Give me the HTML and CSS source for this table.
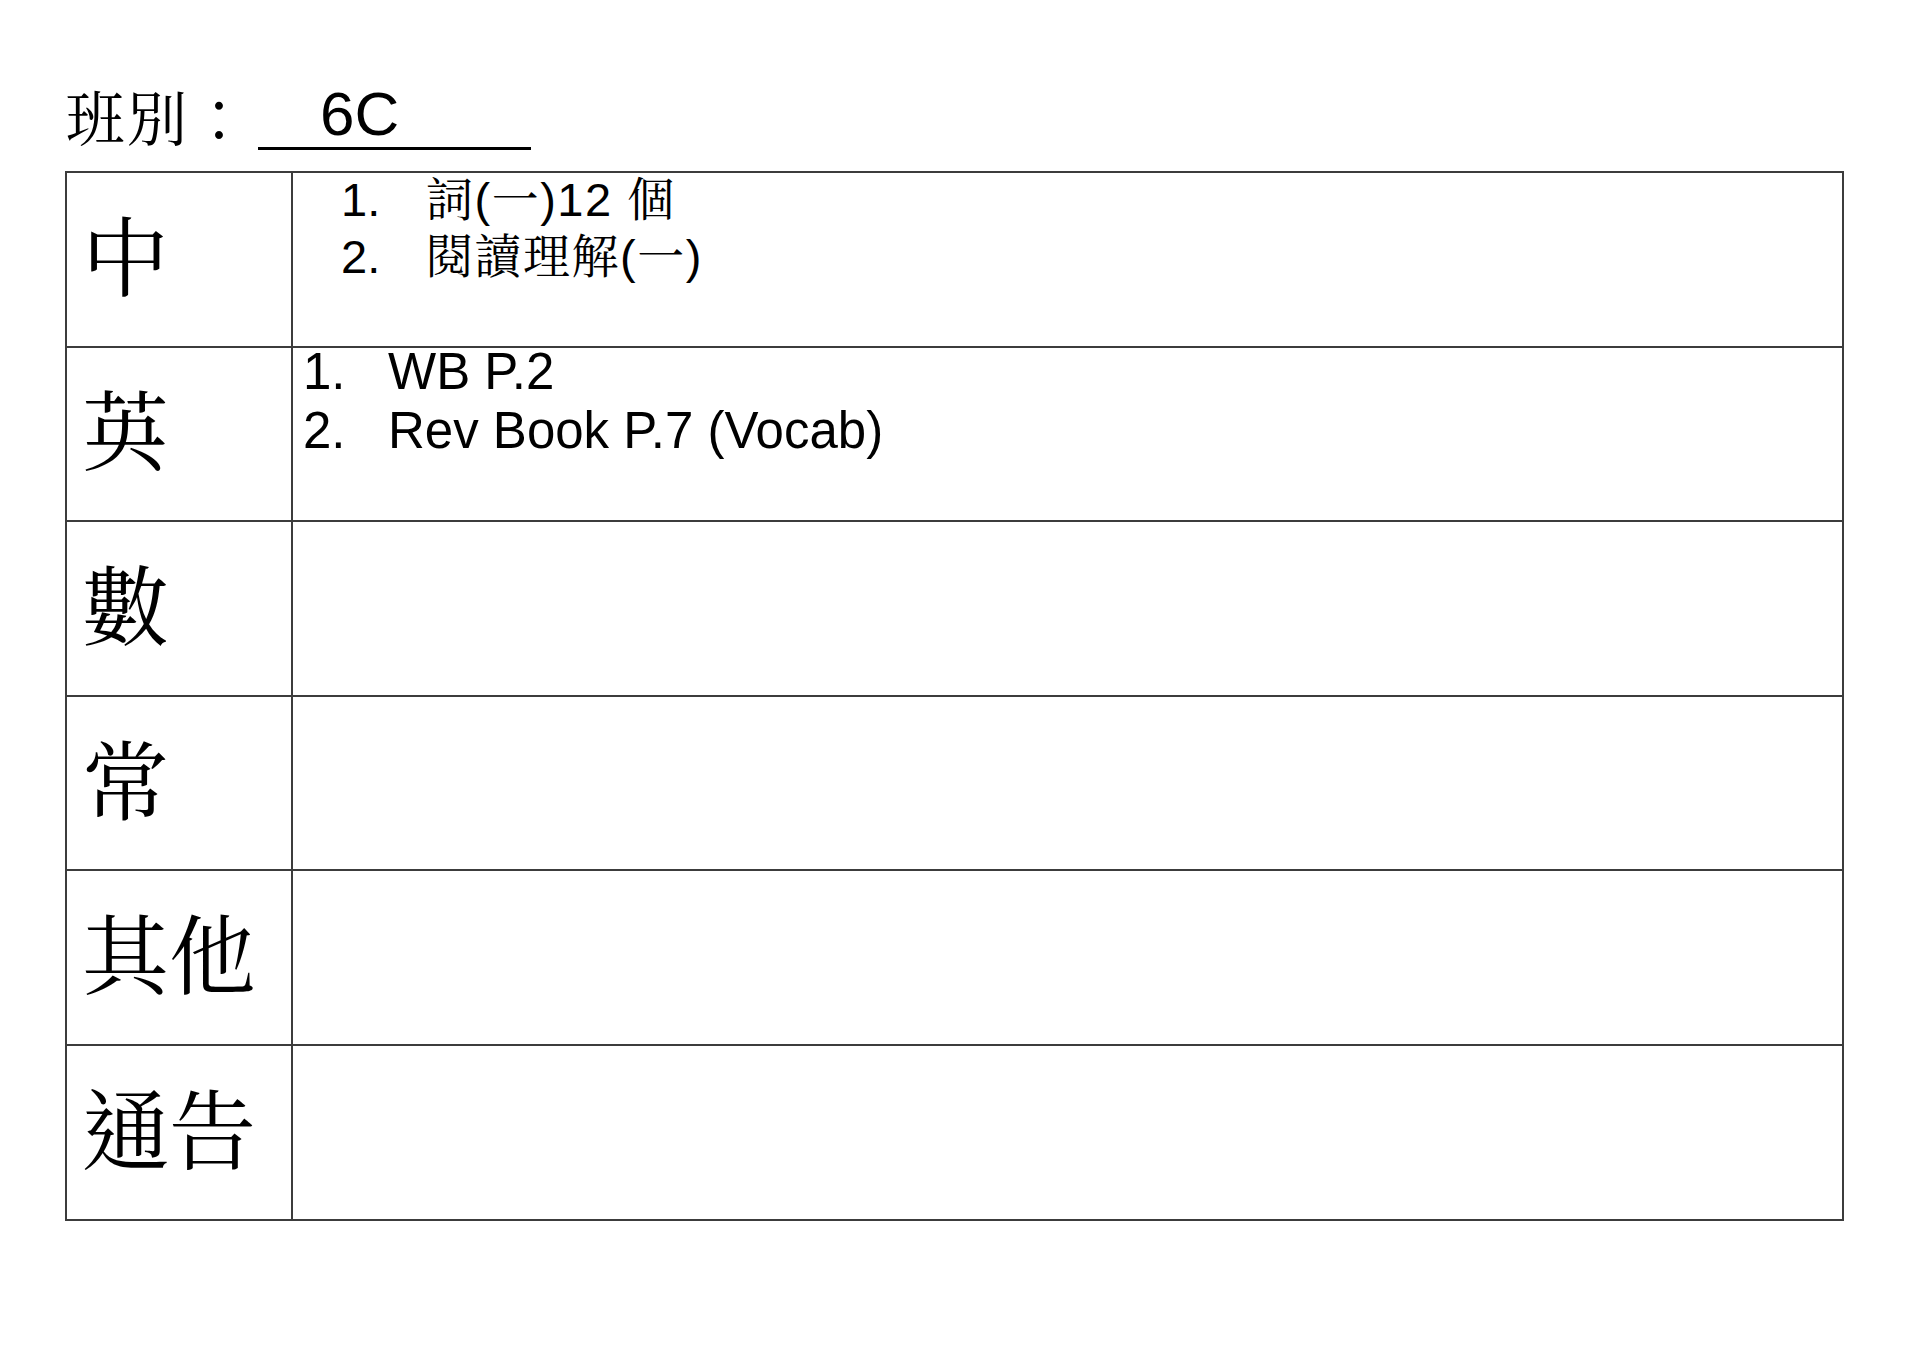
FILE: index.html
```html
<!DOCTYPE html>
<html>
<head>
    <meta charset="utf-8">
    <link rel="stylesheet" href="styles.css">
</head>
<body>
    <div class="sheet">
        <!-- Class heading -->
        <div class="heading">
            <span class="label">班別：</span><span class="class-name">6C</span>
        </div>

        <!-- Homework table -->
        <table class="homework">
            <colgroup>
                <col class="subject-col">
                <col>
            </colgroup>
            <tr>
                <td class="subject">中</td>
                <td class="tasks chinese">
                    <div class="list">
                        <div class="item"><span class="num">1.</span><span>詞(一)12 個</span></div>
                        <div class="item"><span class="num">2.</span><span>閱讀理解(一)</span></div>
                    </div>
                </td>
            </tr>
            <tr>
                <td class="subject">英</td>
                <td class="tasks english">
                    <div class="list">
                        <div class="item"><span class="num">1.</span><span>WB P.2</span></div>
                        <div class="item"><span class="num">2.</span><span>Rev Book P.7 (Vocab)</span></div>
                    </div>
                </td>
            </tr>
            <tr>
                <td class="subject">數</td>
                <td class="tasks"></td>
            </tr>
            <tr>
                <td class="subject">常</td>
                <td class="tasks"></td>
            </tr>
            <tr>
                <td class="subject">其他</td>
                <td class="tasks"></td>
            </tr>
            <tr>
                <td class="subject">通告</td>
                <td class="tasks"></td>
            </tr>
        </table>
    </div>
</body>
</html>
```

FILE: styles.css
```css
body {
    margin: 0;
    background-color: #fff;
    color: #000;
    font-family: "Liberation Sans", "Noto Serif CJK TC", "Noto Sans CJK TC", sans-serif;
}

.sheet {
    padding: 0 76px 0 65px;
}

/* Heading: 班別 with underlined class */
.heading {
    height: 171px;
    padding-top: 83px;
    box-sizing: border-box;
    line-height: 62px;
    white-space: nowrap;
}

.label {
    font-size: 60px;
    letter-spacing: 2px;
    vertical-align: -6px;
}

.class-name {
    display: inline-block;
    width: 211px;
    margin-left: 7px;
    padding-left: 62px;
    padding-bottom: 2px;
    border-bottom: 3px solid #000;
    font-size: 62px;
    line-height: 62px;
    vertical-align: baseline;
}

/* Table */
.homework {
    width: 1779px;
    border-collapse: collapse;
    table-layout: fixed;
}

.subject-col {
    width: 226px;
}

.homework td {
    border: 2px solid #3c3c3c;
    height: 172.6px;
    padding: 0;
}

.subject {
    padding-left: 15px !important;
    font-size: 87px;
    line-height: 1;
    vertical-align: middle;
    white-space: nowrap;
}

.tasks {
    vertical-align: top;
}

.item {
    display: flex;
}

.num {
    flex: none;
}

.chinese {
    padding-left: 48px !important;
    font-size: 47px;
}

.chinese .list {
    margin-top: -2px;
    line-height: 57px;
}

.chinese .num {
    width: 85px;
}

.chinese .num + span {
    letter-spacing: 1.5px;
}

.english {
    padding-left: 10px !important;
    font-size: 51px;
}

.english .list {
    margin-top: -6px;
    line-height: 59px;
}

.english .num {
    width: 85px;
}
```
